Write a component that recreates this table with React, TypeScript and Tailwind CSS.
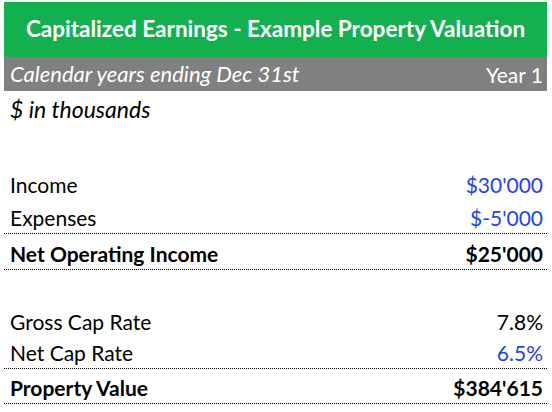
import React from "react";

type Row = {
  label: string;
  value: string;
  blue?: boolean;
  bold?: boolean;
  line?: boolean;
  h: string;
};

const incomeRows: Row[] = [
  { label: "Income", value: "$30'000", blue: true, h: "h-[34px]" },
  { label: "Expenses", value: "$-5'000", blue: true, line: true, h: "h-[34px]" },
  { label: "Net Operating Income", value: "$25'000", bold: true, line: true, h: "h-[36px]" },
];

const valueRows: Row[] = [
  { label: "Gross Cap Rate", value: "7.8%", h: "h-[34px]" },
  { label: "Net Cap Rate", value: "6.5%", blue: true, line: true, h: "h-[32px]" },
  { label: "Property Value", value: "$384'615", bold: true, line: true, h: "h-[35px]" },
];

function DataRow({ row }: { row: Row }) {
  return (
    <div
      className={`${row.h} flex items-end justify-between pl-[6px] pr-[4px] pb-[5px] ${
        row.line ? "border-b border-dotted border-black" : ""
      } ${row.bold ? "font-bold" : ""}`}
    >
      <span className="text-black">{row.label}</span>
      <span className={row.blue ? "text-[#2340f2]" : "text-black"}>{row.value}</span>
    </div>
  );
}

export default function App() {
  return (
    <div
      className="w-[552px] h-[412px] bg-white pl-[4px] pr-[5px] pt-[2px] text-[21px] leading-none"
      style={{ fontFamily: "Lato, 'Open Sans', sans-serif" }}
    >
      {/* Title */}
      <div className="h-[55px] bg-[#13b04f] flex items-center justify-center text-white font-bold text-[22.5px]">
        Capitalized Earnings - Example Property Valuation
      </div>

      {/* Period header */}
      <div className="h-[34px] bg-[#808080] flex items-center justify-between pl-[6px] pr-[4px] text-white">
        <span className="italic text-[22px]">Calendar years ending Dec 31st</span>
        <span>Year 1</span>
      </div>

      <div className="h-[34px] flex items-end pl-[6px] pb-[4px] italic text-[23px] text-black">
        $ in thousands
      </div>

      <div className="h-[41px]" />

      {incomeRows.map((r) => (
        <DataRow key={r.label} row={r} />
      ))}

      <div className="h-[33px]" />

      {valueRows.map((r) => (
        <DataRow key={r.label} row={r} />
      ))}
    </div>
  );
}
